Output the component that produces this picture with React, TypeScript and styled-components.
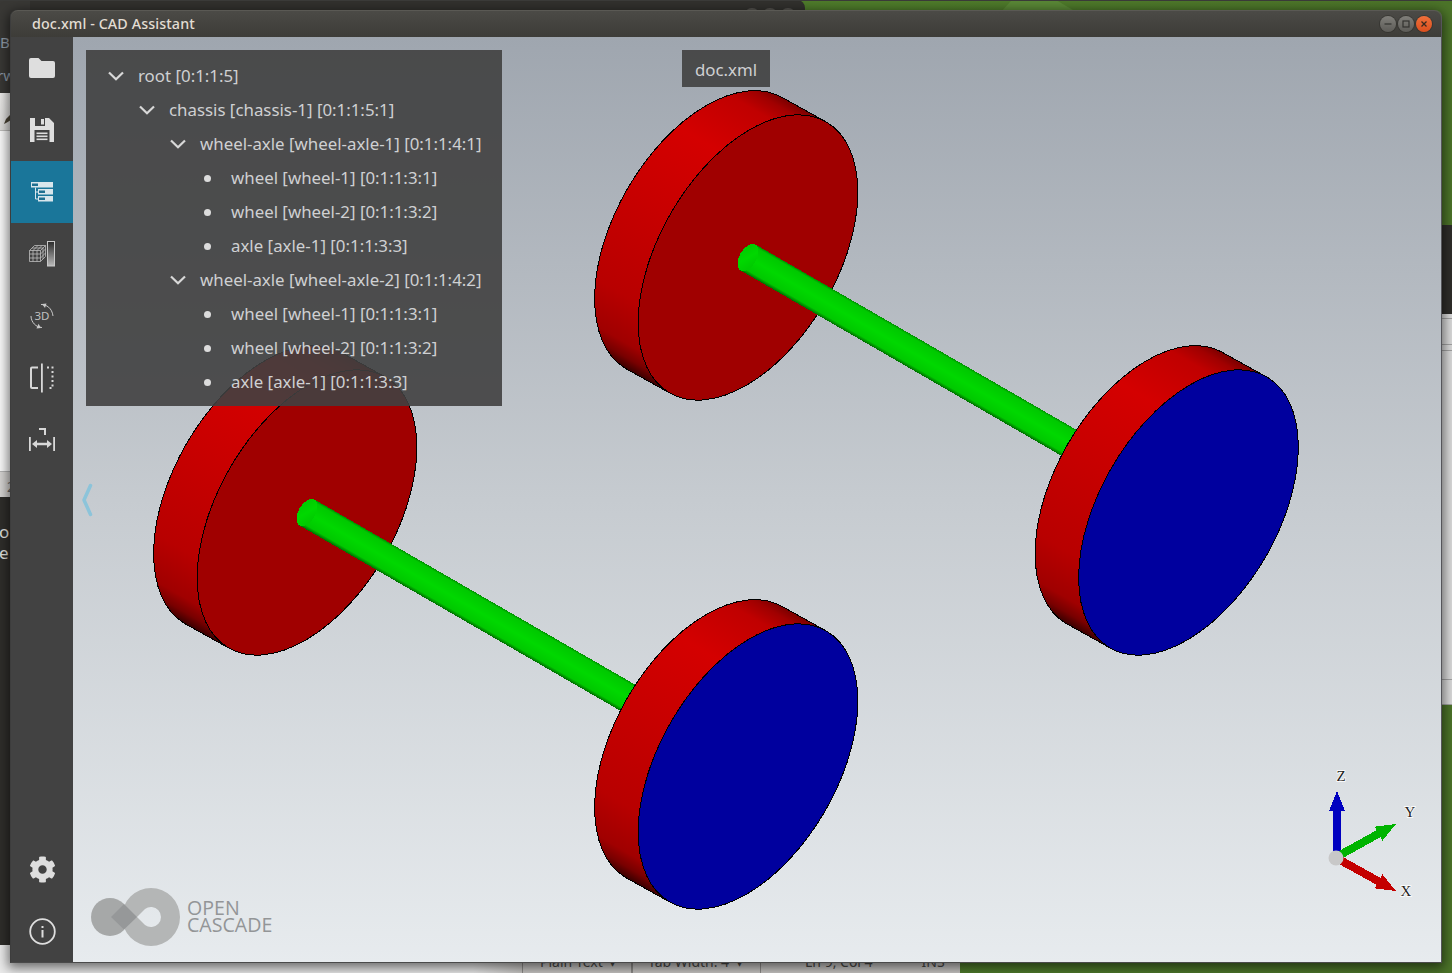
import React from 'react';
import styled, { createGlobalStyle } from 'styled-components';
import { FaCog } from 'react-icons/fa';

const Global = createGlobalStyle`
  html, body { margin: 0; padding: 0; background: #4f7a2c; }
  * { box-sizing: border-box; }
`;

const Desktop = styled.div`
  position: relative;
  width: 1452px;
  height: 973px;
  overflow: hidden;
  font-family: "Noto Sans", "Open Sans", sans-serif;
  background: linear-gradient(90deg, #4b6f2c 0%, #4f7d2b 60%, #4c7429 100%);
  border-top: 1px solid #3a3a38;
`;

const WallpaperRay = styled.div`
  position: absolute;
  left: 1000px;
  top: 0;
  width: 78px;
  height: 12px;
  background: #5a8836;
  clip-path: polygon(14% 0, 74% 0, 100% 100%, 0 100%);
`;

const TopWindow = styled.div`
  position: absolute;
  left: 0;
  top: -1px;
  width: 805px;
  height: 40px;
  border-radius: 0 8px 0 0;
  background: #32312e;
`;

const PeekDot = styled.span<{ $x: number }>`
  position: absolute;
  left: ${(p) => p.$x}px;
  top: 8px;
  width: 16px;
  height: 16px;
  border-radius: 50%;
  background: #55544f;
`;

const LeftStack = styled.div`
  position: absolute;
  left: 0;
  top: 0;
  width: 30px;
  height: 972px;
  display: flex;
  flex-direction: column;
  color: #8f9aa6;
  font-size: 15px;
`;

const LeftHeader = styled.div`
  height: 92px;
  flex: none;
  background: #393835;
  padding-top: 33px;
  display: flex;
  flex-direction: column;
  gap: 16px;
  line-height: 17px;
`;

const LeftClip = styled.span<{ $x: number }>`
  display: block;
  margin-left: ${(p) => p.$x}px;
  white-space: nowrap;
`;

const LeftToolbar = styled.div`
  height: 38px;
  flex: none;
  background: linear-gradient(#ecebe9, #dcdbd9);
  border-bottom: 1px solid #bdbcba;
  padding: 16px 0 0 3px;
`;

const LeftPage = styled.div`
  height: 340px;
  flex: none;
  background: #fafafa;
`;

const LeftStatus = styled.div`
  height: 26px;
  flex: none;
  background: #d6d4d2;
  border-top: 1px solid #b4b4b4;
  color: #666;
  font-size: 14px;
  line-height: 30px;
  padding-left: 7px;
`;

const LeftTerminal = styled.div`
  height: 448px;
  flex: none;
  background: #2f2e2b;
  color: #e4e4e0;
  font-size: 17px;
  line-height: 21px;
  padding-top: 24px;
`;

const LeftFoot = styled.div`
  flex: 1;
  background: #ebebeb;
`;

const RightStack = styled.div`
  position: absolute;
  left: 1442px;
  top: 224px;
  width: 10px;
  height: 480px;
  display: flex;
  flex-direction: column;
`;

const RightDark = styled.div`
  height: 89px;
  background: #2f2e2b;
`;

const RightLight = styled.div<{ $h: number; $flex?: boolean }>`
  ${(p) => (p.$flex ? 'flex: 1;' : `height: ${p.$h}px;`)}
  background: #dcdcdc;
  border-bottom: 1px solid #a4a4a4;
`;

const BottomBar = styled.div`
  position: absolute;
  left: 30px;
  top: 944px;
  width: 930px;
  height: 28px;
  display: flex;
  color: #4a4a48;
  font-size: 14px;
`;

const BottomBlank = styled.div`
  width: 492px;
  background: linear-gradient(90deg, #ececec 0%, #ececec 90%, #c9c7c5 100%);
`;

const StatusCell = styled.div<{ $w: number; $pad: number; $gap: number; $thick?: boolean }>`
  width: ${(p) => p.$w}px;
  padding-left: ${(p) => p.$pad}px;
  background: #c9c7c5;
  border-left: 1px solid #8f8d8b;
  ${(p) => p.$thick && 'border-right: 1px solid #8f8d8b;'}
  white-space: nowrap;
  line-height: 33px;
  display: flex;
  gap: ${(p) => p.$gap}px;
`;

const Win = styled.div`
  position: absolute;
  left: 10px;
  top: 9px;
  width: 1432px;
  height: 953px;
  display: flex;
  flex-direction: column;
  border-left: 1px solid #3d3d3d;
  border-right: 1px solid #55555a;
  border-bottom: 1px solid #4a4a4a;
  border-radius: 7px 7px 0 0;
  box-shadow: 0 3px 12px 2px rgba(0, 0, 0, 0.55);
`;

const TitleBar = styled.div`
  height: 27px;
  flex: none;
  display: flex;
  align-items: center;
  justify-content: space-between;
  padding: 0 9px 1px 21px;
  border-radius: 7px 7px 0 0;
  border-top: 1px solid #5a5954;
  background: linear-gradient(#4b4a46, #3d3c38);
`;

const TitleText = styled.div`
  color: #e2ddd3;
  font-size: 14.3px;
  font-weight: 500;
  letter-spacing: 0.1px;
  white-space: pre;
`;

const WinButtons = styled.div`
  display: flex;
  gap: 2px;
`;

const WinButton = styled.div<{ $close?: boolean }>`
  width: 16px;
  height: 16px;
  border-radius: 50%;
  display: flex;
  align-items: center;
  justify-content: center;
  background: ${(p) => (p.$close ? 'linear-gradient(#f0703a, #dc4f1e)' : 'linear-gradient(#807f7a, #5c5b57)')};
  box-shadow: 0 0 0 1px rgba(40, 40, 36, 0.45);
`;

const Body = styled.div`
  flex: 1;
  display: flex;
  min-height: 0;
`;

const Sidebar = styled.nav`
  width: 62px;
  flex: none;
  background: #424242;
  display: flex;
  flex-direction: column;
  justify-content: space-between;
`;

const SideGroup = styled.div`
  display: flex;
  flex-direction: column;
`;

const SideButton = styled.div<{ $active?: boolean }>`
  width: 62px;
  height: 62px;
  display: flex;
  align-items: center;
  justify-content: center;
  color: #dedede;
  background: ${(p) => (p.$active ? '#1a769a' : 'transparent')};
`;

const Viewport = styled.main`
  position: relative;
  flex: 1;
  overflow: hidden;
  background: linear-gradient(#9fa6af 0%, #c6cbd0 50%, #e7ebee 100%);
`;

const Scene = styled.svg`
  position: absolute;
  inset: 0;
  width: 100%;
  height: 100%;
`;

const TreePanel = styled.div`
  position: absolute;
  left: 13px;
  top: 13px;
  width: 416px;
  height: 356px;
  padding: 8px 0;
  background: rgba(64, 64, 64, 0.9);
`;

const TreeRow = styled.div<{ $depth: number }>`
  height: 34px;
  display: flex;
  align-items: center;
  gap: 8px;
  padding-left: ${(p) => 16 + p.$depth * 31}px;
  color: #cfd0d2;
  font-size: 16.85px;
  white-space: nowrap;
`;

const Marker = styled.span`
  width: 28px;
  flex: none;
  display: flex;
  justify-content: center;
  align-items: center;
`;

const Chevron = styled.svg`
  margin-top: 1px;
`;

const Bullet = styled.span`
  width: 7px;
  height: 7px;
  margin: 2px 4px 0 0;
  border-radius: 50%;
  background: #dcdcdc;
`;

const DocLabel = styled.div`
  position: absolute;
  left: 609px;
  top: 13px;
  width: 88px;
  height: 37px;
  padding-top: 2px;
  display: flex;
  align-items: center;
  justify-content: center;
  color: #cfd0d2;
  font-size: 16.85px;
  background: rgba(64, 64, 64, 0.9);
`;

const PanelHandle = styled.svg`
  position: absolute;
  left: 8px;
  top: 446px;
`;

const Logo = styled.div`
  position: absolute;
  left: 18px;
  bottom: 16px;
  display: flex;
  align-items: center;
  gap: 6px;
`;

const LogoText = styled.div`
  color: #939597;
  font-family: "Open Sans", "Noto Sans", sans-serif;
  font-size: 19.6px;
  line-height: 17px;
  padding-bottom: 2px;
`;

const FolderIcon = () => (
  <svg width="26" height="20" viewBox="0 0 26 20">
    <path fill="currentColor" d="M2 0h7.5l3 3H24a2 2 0 0 1 2 2v13a2 2 0 0 1-2 2H2a2 2 0 0 1-2-2V2a2 2 0 0 1 2-2z" />
  </svg>
);

const SaveIcon = () => (
  <svg width="24" height="24" viewBox="0 0 24 24">
    <path
      fill="currentColor"
      fillRule="evenodd"
      d="M0 0H19L24 5V24H0ZM5 0V8H15V0ZM4.5 12V24H19.5V12Z"
    />
    <rect x="11" y="1" width="3" height="5.5" fill="currentColor" />
    <rect x="6.5" y="14.5" width="11" height="1.6" fill="currentColor" />
    <rect x="6.5" y="17.5" width="11" height="1.6" fill="currentColor" />
    <rect x="6.5" y="20.5" width="11" height="1.6" fill="currentColor" />
  </svg>
);

const TreeIcon = () => (
  <svg width="22" height="20" viewBox="0 0 22 20">
    <rect x="0" y="0" width="22" height="5.5" fill="#d8e6ec" />
    <rect x="1" y="1.5" width="6" height="2.5" fill="#1f6f90" />
    <rect x="7" y="7" width="15" height="5.5" fill="#d8e6ec" />
    <rect x="8" y="8.5" width="6" height="2.5" fill="#1f6f90" />
    <rect x="7" y="14" width="15" height="5.5" fill="#d8e6ec" />
    <rect x="8" y="15.5" width="6" height="2.5" fill="#1f6f90" />
    <path d="M4.5 5.5V17H7M4.5 10H7" stroke="#d8e6ec" strokeWidth="1" fill="none" />
  </svg>
);

const CubeIcon = () => (
  <svg width="26" height="26" viewBox="0 0 26 26" fill="none">
    <g stroke="#bcbcbc" strokeWidth="0.8">
      <path d="M0.5 9.5H11.5V20.5H0.5ZM0.5 9.5L5.5 4.5H16.5L11.500 9.5M16.5 4.5V15.5L11.500 20.5" />
      <path d="M4 9.5V20.5M8 9.5V20.5M0.5 13H11.5M0.5 17H11.5M3 7H14M8 9.5L13 4.5M4 9.5L9 4.5M14 7V18M11.5 13L16.5 8M11.5 17L16.5 12" />
    </g>
    <defs>
      <linearGradient id="scaleBar" x1="0" y1="0" x2="0" y2="1">
        <stop offset="0" stopColor="#2a2a2a" />
        <stop offset="1" stopColor="#bbbbbb" />
      </linearGradient>
    </defs>
    <rect x="18.5" y="0.5" width="7" height="24.5" fill="url(#scaleBar)" stroke="#c8c8c8" />
  </svg>
);

const RotateIcon = () => (
  <svg width="26" height="26" viewBox="0 0 26 26" fill="none">
    <path d="M12 1.5C17.5 1.5 23 5 24 13" stroke="#c8c8c8" strokeWidth="1" />
    <path d="M2 13C2 19 7 24.500 13 24.500" stroke="#c8c8c8" strokeWidth="1" />
    <path d="M13 1L17.500 0.500L16 5Z" fill="#c8c8c8" />
    <path d="M12 25L7.500 25.500L9.500 20.800Z" fill="#c8c8c8" />
    <text x="5.500" y="17" fontSize="11.500" fill="#c0c0c0" fontFamily="Noto Sans, sans-serif">3D</text>
  </svg>
);

const ClipIcon = () => (
  <svg width="24" height="30" viewBox="0 0 24 30" fill="none">
    <path d="M8 4.500H2a1 1 0 0 0-1 1V24a1 1 0 0 0 1 1H8" stroke="#d8d8d8" strokeWidth="2" />
    <rect x="11" y="0.500" width="1.800" height="29" fill="#d8d8d8" />
    <path d="M17 4.500H22.500V25H17" stroke="#d8d8d8" strokeWidth="2" strokeDasharray="2 2.500" />
  </svg>
);

const MeasureIcon = () => (
  <svg width="26" height="24" viewBox="0 0 26 24" fill="none">
    <path d="M10 1H16V7" stroke="#d8d8d8" strokeWidth="2" />
    <rect x="0" y="9" width="1.800" height="14" fill="#d8d8d8" />
    <rect x="24.200" y="9" width="1.800" height="14" fill="#d8d8d8" />
    <path d="M3 16L8 12V14.800H18V12L23 16L18 20V17.200H8V20Z" fill="#d8d8d8" />
  </svg>
);

const InfoIcon = () => (
  <svg width="27" height="27" viewBox="0 0 27 27" fill="none">
    <circle cx="13.500" cy="13.500" r="12.300" stroke="#dedede" strokeWidth="1.800" />
    <rect x="12.500" y="12" width="2" height="7.500" fill="#dedede" />
    <rect x="12.500" y="8" width="2" height="2" fill="#dedede" />
  </svg>
);

const RX = 156.5;
const RY = 89;
const DX = -45;
const DY = -25;
const MX = 78.25;
const MY = 135.5;

const Wheel = ({ id, cx, cy, face }: { id: string; cx: number; cy: number; face: string }) => {
  const p1 = [cx + MX, cy - MY];
  const p2 = [cx - MX, cy + MY];
  const side = `M${p1[0]} ${p1[1]} L${p1[0] + DX} ${p1[1] + DY} A${RX} ${RY} -60 0 0 ${p2[0] + DX} ${p2[1] + DY} L${p2[0]} ${p2[1]} Z`;
  return (
    <g shapeRendering="crispEdges">
      <defs>
        <linearGradient id={id} gradientUnits="userSpaceOnUse" x1={p1[0] + DX / 2} y1={p1[1] + DY / 2} x2={p2[0] + DX / 2} y2={p2[1] + DY / 2}>
          <stop offset="0" stopColor="#7a0000" />
          <stop offset="0.03" stopColor="#a00000" />
          <stop offset="0.08" stopColor="#c00000" />
          <stop offset="0.25" stopColor="#d40000" />
          <stop offset="0.5" stopColor="#c80000" />
          <stop offset="0.8" stopColor="#b80000" />
          <stop offset="0.93" stopColor="#a00000" />
          <stop offset="0.97" stopColor="#780000" />
          <stop offset="1" stopColor="#3c0000" />
        </linearGradient>
      </defs>
      <path d={side} fill={`url(#${id})`} stroke="#000" strokeWidth="1" />
      <ellipse cx={cx} cy={cy} rx={RX} ry={RY} transform={`rotate(-60 ${cx} ${cy})`} fill={face} stroke="#000" strokeWidth="1" />
    </g>
  );
};

const Axle = ({ id, cx, cy, length }: { id: string; cx: number; cy: number; length: number }) => {
  const ux = 0.866;
  const uy = 0.5;
  const px = 7.5;
  const py = -13;
  const ex = cx + ux * length;
  const ey = cy + uy * length;
  return (
    <g shapeRendering="crispEdges">
      <defs>
        <linearGradient id={id} gradientUnits="userSpaceOnUse" x1={cx + px} y1={cy + py} x2={cx - px} y2={cy - py}>
          <stop offset="0" stopColor="#009000" />
          <stop offset="0.08" stopColor="#00c800" />
          <stop offset="0.5" stopColor="#00d800" />
          <stop offset="0.88" stopColor="#00c800" />
          <stop offset="1" stopColor="#007000" />
        </linearGradient>
      </defs>
      <path
        d={`M${cx + px} ${cy + py} L${ex + px} ${ey + py} L${ex - px} ${ey - py} L${cx - px} ${cy - py} Z`}
        fill={`url(#${id})`}
      />
      <ellipse cx={cx} cy={cy} rx={15} ry={8.5} transform={`rotate(-60 ${cx} ${cy})`} fill={`url(#${id})`} />
    </g>
  );
};

const TriadArrow = ({ from, to, color }: { from: [number, number]; to: [number, number]; color: string }) => {
  const dx = to[0] - from[0];
  const dy = to[1] - from[1];
  const len = Math.hypot(dx, dy);
  const ux = dx / len;
  const uy = dy / len;
  const nx = -uy;
  const ny = ux;
  const base = [to[0] - ux * 20, to[1] - uy * 20];
  const pts = [
    [from[0] + nx * 4, from[1] + ny * 4],
    [base[0] + nx * 4, base[1] + ny * 4],
    [base[0] + nx * 8, base[1] + ny * 8],
    to,
    [base[0] - nx * 8, base[1] - ny * 8],
    [base[0] - nx * 4, base[1] - ny * 4],
    [from[0] - nx * 4, from[1] - ny * 4],
  ];
  return <polygon points={pts.map((q) => q.join(',')).join(' ')} fill={color} shapeRendering="crispEdges" />;
};

const AxisLabel = styled.text`
  font-family: "Liberation Serif", serif;
  font-size: 15px;
  fill: #222;
  stroke: #fff;
  stroke-width: 1.5px;
  paint-order: stroke;
  text-anchor: middle;
`;

const StatusInsert = styled.span`
  margin-left: 15px;
`;

const tree = [
  { depth: 0, label: 'root [0:1:1:5]', open: true },
  { depth: 1, label: 'chassis [chassis-1] [0:1:1:5:1]', open: true },
  { depth: 2, label: 'wheel-axle [wheel-axle-1] [0:1:1:4:1]', open: true },
  { depth: 3, label: 'wheel [wheel-1] [0:1:1:3:1]' },
  { depth: 3, label: 'wheel [wheel-2] [0:1:1:3:2]' },
  { depth: 3, label: 'axle [axle-1] [0:1:1:3:3]' },
  { depth: 2, label: 'wheel-axle [wheel-axle-2] [0:1:1:4:2]', open: true },
  { depth: 3, label: 'wheel [wheel-1] [0:1:1:3:1]' },
  { depth: 3, label: 'wheel [wheel-2] [0:1:1:3:2]' },
  { depth: 3, label: 'axle [axle-1] [0:1:1:3:3]' },
];

export default function App() {
  return (
    <Desktop>
      <Global />
      <WallpaperRay />
      <TopWindow>
        <PeekDot $x={744} />
        <PeekDot $x={762} />
        <PeekDot $x={780} />
      </TopWindow>
      <RightStack>
        <RightDark />
        <RightLight $h={5} />
        <RightLight $h={26} />
        <RightLight $h={6} />
        <RightLight $h={329} />
        <RightLight $h={0} $flex />
      </RightStack>
      <LeftStack>
        <LeftHeader>
          <LeftClip $x={0}>Bo</LeftClip>
          <LeftClip $x={-3}>rw</LeftClip>
        </LeftHeader>
        <LeftToolbar>
          <svg width="8" height="12" viewBox="0 0 8 12">
            <path d="M1 11L3 6L8 1V7L3 10Z" fill="#4a4334" />
          </svg>
        </LeftToolbar>
        <LeftPage />
        <LeftStatus>2</LeftStatus>
        <LeftTerminal>
          <LeftClip $x={-1}>o</LeftClip>
          <LeftClip $x={-1}>e</LeftClip>
        </LeftTerminal>
        <LeftFoot />
      </LeftStack>
      <BottomBar>
        <BottomBlank />
        <StatusCell $w={110} $pad={17} $gap={6} $thick>
          Plain Text <span>▾</span>
        </StatusCell>
        <StatusCell $w={128} $pad={15} $gap={7}>
          Tab Width: 4 <span>▾</span>
        </StatusCell>
        <StatusCell $w={200} $pad={44} $gap={34}>
          <span>Ln 9, Col 4</span>
          <StatusInsert>INS</StatusInsert>
        </StatusCell>
      </BottomBar>
      <Win>
        <TitleBar>
          <TitleText>doc.xml - CAD Assistant</TitleText>
          <WinButtons>
            <WinButton>
              <svg width="10" height="10" viewBox="0 0 10 10">
                <path d="M1.500 5H8.500" stroke="#33322f" strokeWidth="1.200" />
              </svg>
            </WinButton>
            <WinButton>
              <svg width="10" height="10" viewBox="0 0 10 10">
                <rect x="2" y="2" width="6" height="6" fill="none" stroke="#33322f" strokeWidth="1.200" />
              </svg>
            </WinButton>
            <WinButton $close>
              <svg width="10" height="10" viewBox="0 0 10 10">
                <path d="M2.500 2.500L7.500 7.500M7.500 2.500L2.500 7.500" stroke="#3a2a20" strokeWidth="1.300" />
              </svg>
            </WinButton>
          </WinButtons>
        </TitleBar>
        <Body>
          <Sidebar>
            <SideGroup>
              <SideButton><FolderIcon /></SideButton>
              <SideButton><SaveIcon /></SideButton>
              <SideButton $active><TreeIcon /></SideButton>
              <SideButton><CubeIcon /></SideButton>
              <SideButton><RotateIcon /></SideButton>
              <SideButton><ClipIcon /></SideButton>
              <SideButton><MeasureIcon /></SideButton>
            </SideGroup>
            <SideGroup>
              <SideButton><FaCog size={27} /></SideButton>
              <SideButton><InfoIcon /></SideButton>
            </SideGroup>
          </Sidebar>
          <Viewport>
            <Scene viewBox="73 37 1368 925">
              <Wheel id="wa" cx={748} cy={257.5} face="#a00000" />
              <Axle id="aa" cx={748} cy={257.5} length={450} />
              <Wheel id="wb" cx={1188.500} cy={512.500} face="#00009e" />
              <Wheel id="wc" cx={307} cy={512.500} face="#a00000" />
              <Axle id="ab" cx={307} cy={512.500} length={450} />
              <Wheel id="wd" cx={748} cy={766.500} face="#00009e" />
              <TriadArrow from={[1337, 856]} to={[1337, 791]} color="#0000c0" />
              <TriadArrow from={[1340, 855]} to={[1396, 824]} color="#00b400" />
              <TriadArrow from={[1340, 860]} to={[1396, 891]} color="#c40000" />
              <circle cx={1336} cy={858} r={7.500} fill="#c8c8c8" />
              <AxisLabel x={1341} y={781}>Z</AxisLabel>
              <AxisLabel x={1410} y={817}>Y</AxisLabel>
              <AxisLabel x={1406} y={896}>X</AxisLabel>
            </Scene>
            <TreePanel>
              {tree.map((row, i) => (
                <TreeRow key={i} $depth={row.depth}>
                  <Marker>
                    {row.open ? (
                      <Chevron width="18" height="10" viewBox="0 0 18 10" fill="none">
                        <path d="M2 1.500L9 8.200L16 1.500" stroke="#d8d8d8" strokeWidth="2.200" />
                      </Chevron>
                    ) : (
                      <Bullet />
                    )}
                  </Marker>
                  <span>{row.label}</span>
                </TreeRow>
              ))}
            </TreePanel>
            <DocLabel>doc.xml</DocLabel>
            <PanelHandle width="12" height="34" viewBox="0 0 12 34" fill="none">
              <path d="M9.500 2.500L3 17L9.500 31.500" stroke="#8cc4da" strokeWidth="3.500" strokeLinecap="round" strokeLinejoin="round" />
            </PanelHandle>
            <Logo>
              <svg width="90" height="58" viewBox="91 888 90 58">
                <circle cx="110" cy="917" r="19" fill="#a6a8a8" />
                <path
                  fillRule="evenodd"
                  fill="#b4b6b6"
                  d="M151 888A29 29 0 1 1 151 946A29 29 0 1 1 151 888ZM137 917L145 909A10 10 0 1 1 145 925Z"
                />
                <path d="M124 904L137 917L124 929.500L111 917Z" fill="#969899" />
              </svg>
              <LogoText>
                OPEN
                <br />
                CASCADE
              </LogoText>
            </Logo>
          </Viewport>
        </Body>
      </Win>
    </Desktop>
  );
}
